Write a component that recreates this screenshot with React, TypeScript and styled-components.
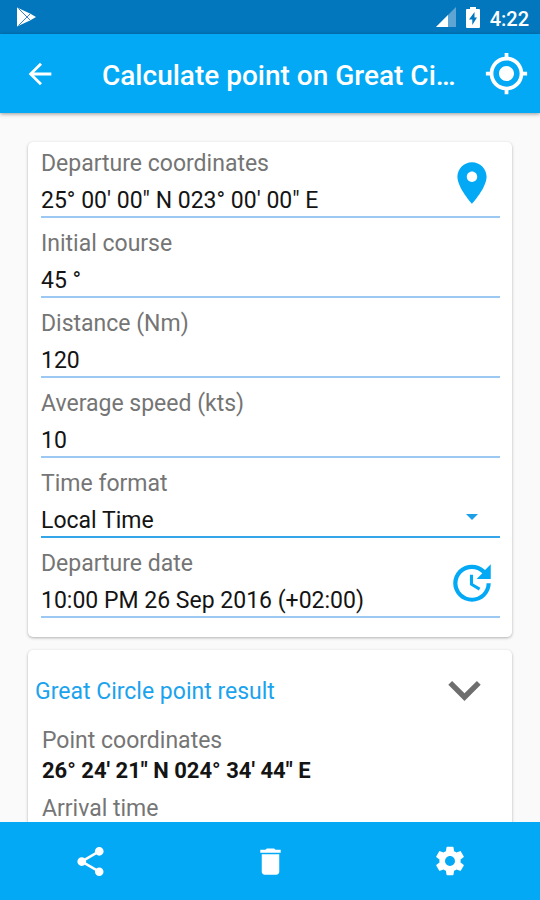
import React, { useState } from "react";
import styled, { createGlobalStyle } from "styled-components";

const BLUE = "#03a9f4";

const GlobalStyle = createGlobalStyle`
  *, *::before, *::after { box-sizing: border-box; }
  body { margin: 0; background: #fafafa; }
  body, button, input, select { font-family: Roboto, "Liberation Sans", sans-serif; }
`;

const Screen = styled.div`
  display: flex;
  flex-direction: column;
  height: 100vh;
  background: #fafafa;
  color: #141414;
`;

const StatusBar = styled.div`
  flex: none;
  display: flex;
  align-items: center;
  justify-content: space-between;
  height: 34px;
  padding: 0 11px 0 16px;
  background: #0277bd;
  color: #fff;
`;

const StatusIcons = styled.div`
  display: flex;
  align-items: center;
  gap: 10px;
`;

const Clock = styled.time`
  font-size: 20px;
  line-height: 24px;
  font-weight: 500;
  padding-top: 3px;
`;

const Toolbar = styled.header`
  flex: none;
  display: flex;
  align-items: center;
  height: 79px;
  padding: 0 9px 0 12px;
  background: ${BLUE};
  color: #fff;
  box-shadow: 0 1px 4px rgba(0, 0, 0, 0.4);
  z-index: 1;
`;

const IconButton = styled.button<{ $width: number }>`
  flex: none;
  display: flex;
  align-items: center;
  justify-content: center;
  width: ${(p) => p.$width}px;
  height: 56px;
  padding: 0;
  border: 0;
  background: none;
  color: inherit;
  cursor: pointer;
`;

const Title = styled.h1`
  flex: 1;
  min-width: 0;
  margin: 0 12px 0 34px;
  padding-top: 4px;
  overflow: hidden;
  white-space: nowrap;
  text-overflow: ellipsis;
  font-size: 28px;
  line-height: 36px;
  font-weight: 500;
`;

const Content = styled.main`
  flex: 1;
  min-height: 0;
  display: flex;
  flex-direction: column;
  gap: 13px;
  padding: 29px 28px 0;
  overflow-y: auto;
  scrollbar-width: none;
`;

const Card = styled.section`
  flex: none;
  border-radius: 5px;
  background: #fff;
  box-shadow: 0 1px 3px rgba(0, 0, 0, 0.3);
`;

const FormCard = styled(Card)`
  display: flex;
  flex-direction: column;
  gap: 4px;
  padding: 0 12px 19px 13px;
`;

const Field = styled.div<{ $strong?: boolean }>`
  display: flex;
  align-items: center;
  height: 76px;
  border-bottom: 2px solid ${(p) => (p.$strong ? "#35a5ea" : "#9cc8f4")};
`;

const FieldText = styled.div`
  position: relative;
  flex: 1;
  min-width: 0;
  display: flex;
  flex-direction: column;
  gap: 10px;
  padding-top: 6px;
`;

const Label = styled.label`
  font-size: 23px;
  line-height: 27px;
  color: #757575;
`;

const valueStyle = `
  width: 100%;
  height: 27px;
  padding: 0;
  border: 0;
  outline: 0;
  background: none;
  color: #141414;
  font-size: 23px;
  line-height: 27px;
`;

const Input = styled.input`
  ${valueStyle}
`;

const Select = styled.select`
  ${valueStyle}
  appearance: none;
`;

const SelectArrow = styled.svg`
  position: absolute;
  right: 22px;
  bottom: 14px;
  pointer-events: none;
`;

const FieldAction = styled(IconButton)`
  height: 64px;
  padding-top: 8px;
  color: ${BLUE};
`;

const ResultCard = styled(Card)`
  padding: 13px 12px 24px 7px;
`;

const ResultHeader = styled.div`
  display: flex;
  align-items: center;
  justify-content: space-between;
  height: 56px;
  padding-right: 8px;
`;

const ResultTitle = styled.h2`
  margin: 0;
  padding-top: 2px;
  font-size: 23px;
  line-height: 28px;
  font-weight: 400;
  color: #1ba3ee;
`;

const ExpandButton = styled(IconButton)`
  color: #6e6e6e;
`;

const Results = styled.dl`
  margin: 0;
  padding: 7px 0 0 7px;
  font-size: 23px;
  line-height: 30px;
`;

const Term = styled.dt`
  color: #757575;
`;

const Value = styled.dd`
  margin: 0 0 8px;
  font-size: 22px;
  font-weight: 700;
`;

const BottomBar = styled.nav`
  flex: none;
  display: grid;
  grid-template-columns: repeat(3, 1fr);
  place-items: center;
  height: 78px;
  background: ${BLUE};
  color: #fff;
`;

const PATHS = {
  back: "M20 11H7.83l5.59-5.59L12 4l-8 8 8 8 1.41-1.41L7.83 13H20v-2z",
  locate:
    "M12 8c-2.21 0-4 1.79-4 4s1.79 4 4 4 4-1.79 4-4-1.79-4-4-4zm8.94 3c-.46-4.17-3.77-7.48-7.94-7.94V1h-2v2.06C6.83 3.52 3.52 6.83 3.06 11H1v2h2.06c.46 4.17 3.77 7.48 7.94 7.94V23h2v-2.06c4.17-.46 7.48-3.77 7.94-7.94H23v-2h-2.06zM12 19c-3.87 0-7-3.13-7-7s3.13-7 7-7 7 3.13 7 7-3.13 7-7 7z",
  place:
    "M12 2C8.13 2 5 5.13 5 9c0 5.25 7 13 7 13s7-7.75 7-13c0-3.87-3.13-7-7-7zm0 9.5c-1.38 0-2.5-1.12-2.5-2.5s1.12-2.5 2.5-2.5 2.5 1.12 2.5 2.5-1.12 2.5-2.5 2.5z",
  update:
    "M21 10.12h-6.78l2.74-2.82c-2.73-2.7-7.15-2.8-9.88-.1-2.73 2.71-2.73 7.08 0 9.79s7.15 2.71 9.88 0C18.32 15.65 19 14.08 19 12.1h2c0 1.98-.88 4.55-2.64 6.29-3.51 3.48-9.21 3.48-12.72 0-3.5-3.47-3.53-9.11-.02-12.58s9.14-3.47 12.65 0L21 3v7.12zM12.5 8v4.25l3.5 2.08-.72 1.21L11 13V8h1.5z",
  share:
    "M18 16.08c-.76 0-1.44.3-1.96.77L8.91 12.7c.05-.23.09-.46.09-.7s-.04-.47-.09-.7l7.05-4.11c.54.5 1.25.81 2.04.81 1.66 0 3-1.34 3-3s-1.34-3-3-3-3 1.34-3 3c0 .24.04.47.09.7L8.04 9.81C7.5 9.31 6.79 9 6 9c-1.66 0-3 1.34-3 3s1.34 3 3 3c.79 0 1.5-.31 2.04-.81l7.12 4.16c-.05.21-.08.43-.08.65 0 1.61 1.31 2.92 2.92 2.92s2.92-1.31 2.92-2.92-1.31-2.92-2.92-2.92z",
  trash: "M6 19c0 1.1.9 2 2 2h8c1.1 0 2-.9 2-2V7H6v12zM19 4h-3.5l-1-1h-5l-1 1H5v2h14V4z",
  settings:
    "M19.43 12.98c.04-.32.07-.64.07-.98s-.03-.66-.07-.98l2.11-1.65c.19-.15.24-.42.12-.64l-2-3.46c-.12-.22-.39-.3-.61-.22l-2.49 1c-.52-.4-1.08-.73-1.69-.98l-.38-2.65C14.46 2.18 14.25 2 14 2h-4c-.25 0-.46.18-.49.42l-.38 2.65c-.61.25-1.17.59-1.69.98l-2.49-1c-.23-.09-.49 0-.61.22l-2 3.46c-.13.22-.07.49.12.64l2.11 1.65c-.04.32-.07.65-.07.98s.03.66.07.98l-2.11 1.65c-.19.15-.24.42-.12.64l2 3.46c.12.22.39.3.61.22l2.49-1c.52.4 1.08.73 1.69.98l.38 2.65c.03.24.24.42.49.42h4c.25 0 .46-.18.49-.42l.38-2.65c.61-.25 1.17-.59 1.69-.98l2.49 1c.23.09.49 0 .61-.22l2-3.46c.12-.22.07-.49-.12-.64l-2.11-1.65zM12 15.5c-1.93 0-3.5-1.57-3.5-3.5s1.57-3.5 3.5-3.5 3.5 1.57 3.5 3.5-1.57 3.5-3.5 3.5z",
};

function Icon({ name, size }: { name: keyof typeof PATHS; size: number }) {
  return (
    <svg width={size} height={size} viewBox="0 0 24 24" fill="currentColor" aria-hidden="true">
      <path d={PATHS[name]} />
    </svg>
  );
}

function PlayIcon() {
  return (
    <svg width="20" height="20" viewBox="0 0 20 20" aria-hidden="true">
      <path d="M1 .5 14 6.5 20 10 14 13.5 1 19.5z" fill="#fff" />
      <path d="M2.5 1.5 14.5 13.5M2.5 18.5 14.5 6.5" stroke="#3b82c0" strokeWidth="1" fill="none" />
    </svg>
  );
}

function SignalIcon() {
  return (
    <svg width="20" height="20" viewBox="0 0 20 20" aria-hidden="true">
      <path d="M0 20 20 0v20z" fill="#5fa5d3" />
      <path d="M0 20 12 8v12z" fill="#fff" />
    </svg>
  );
}

function BatteryIcon() {
  return (
    <svg width="14" height="21" viewBox="0 0 14 21" aria-hidden="true">
      <path d="M4 0h6v2h3q1 0 1 1v17q0 1-1 1H1q-1 0-1-1V3q0-1 1-1h3z" fill="#fff" />
      <path d="M8.5 5 3 12.5h3.3V18L11 10.500H8.500z" fill="#0277bd" />
    </svg>
  );
}

type TextFieldProps = {
  id: string;
  label: string;
  initial: string;
  action?: { label: string; icon: keyof typeof PATHS };
};

function TextField({ id, label, initial, action }: TextFieldProps) {
  const [value, setValue] = useState(initial);
  return (
    <Field>
      <FieldText>
        <Label htmlFor={id}>{label}</Label>
        <Input id={id} value={value} onChange={(e) => setValue(e.target.value)} />
      </FieldText>
      {action && (
        <FieldAction type="button" $width={56} aria-label={action.label}>
          <Icon name={action.icon} size={50} />
        </FieldAction>
      )}
    </Field>
  );
}

export default function App() {
  return (
    <Screen>
      <GlobalStyle />
      <StatusBar>
        <PlayIcon />
        <StatusIcons>
          <SignalIcon />
          <BatteryIcon />
          <Clock>4:22</Clock>
        </StatusIcons>
      </StatusBar>
      <Toolbar>
        <IconButton type="button" $width={56} aria-label="Back">
          <Icon name="back" size={34} />
        </IconButton>
        <Title>Calculate point on Great Ci…</Title>
        <IconButton type="button" $width={50} aria-label="My location">
          <Icon name="locate" size={45} />
        </IconButton>
      </Toolbar>
      <Content>
        <FormCard as="form">
          <TextField
            id="departure"
            label="Departure coordinates"
            initial={"25° 00' 00\" N 023° 00' 00\" E"}
            action={{ label: "Pick on map", icon: "place" }}
          />
          <TextField id="course" label="Initial course" initial="45 °" />
          <TextField id="distance" label="Distance (Nm)" initial="120" />
          <TextField id="speed" label="Average speed (kts)" initial="10" />
          <Field $strong>
            <FieldText>
              <Label htmlFor="format">Time format</Label>
              <Select id="format">
                <option>Local Time</option>
              </Select>
              <SelectArrow width="12" height="6" viewBox="0 0 12 6" aria-hidden="true">
                <path d="M0 0h12L6 6z" fill="#1b9fe8" />
              </SelectArrow>
            </FieldText>
          </Field>
          <TextField
            id="date"
            label="Departure date"
            initial="10:00 PM 26 Sep 2016 (+02:00)"
            action={{ label: "Set to current time", icon: "update" }}
          />
        </FormCard>
        <ResultCard>
          <ResultHeader>
            <ResultTitle>Great Circle point result</ResultTitle>
            <ExpandButton type="button" $width={56} aria-label="Expand result">
              <svg width="33" height="20" viewBox="6 8.590 12 7.410" fill="currentColor" aria-hidden="true">
                <path d="M16.590 8.590 12 13.170 7.410 8.590 6 10l6 6 6-6z" />
              </svg>
            </ExpandButton>
          </ResultHeader>
          <Results>
            <Term>Point coordinates</Term>
            <Value>26° 24' 21" N 024° 34' 44" E</Value>
            <Term>Arrival time</Term>
          </Results>
        </ResultCard>
      </Content>
      <BottomBar>
        <IconButton type="button" $width={56} aria-label="Share">
          <Icon name="share" size={35} />
        </IconButton>
        <IconButton type="button" $width={56} aria-label="Delete">
          <Icon name="trash" size={35} />
        </IconButton>
        <IconButton type="button" $width={56} aria-label="Settings">
          <Icon name="settings" size={34} />
        </IconButton>
      </BottomBar>
    </Screen>
  );
}
